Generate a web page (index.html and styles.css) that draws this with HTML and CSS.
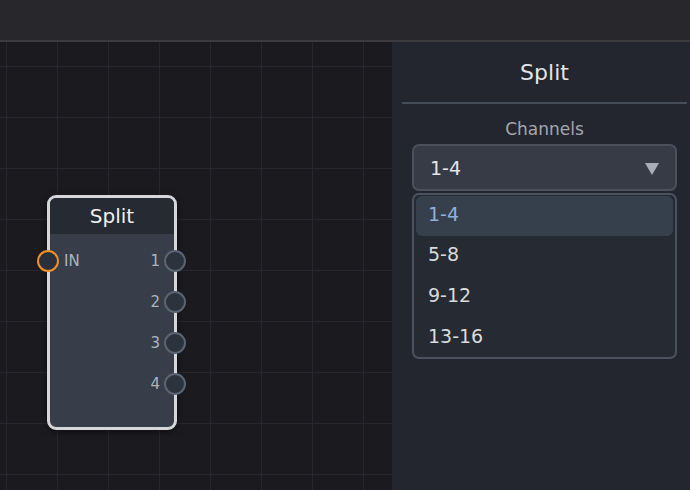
FILE: index.html
```html
<!DOCTYPE html>
<html lang="en">
<head>
    <meta charset="UTF-8">
    <meta name="viewport" content="width=device-width, initial-scale=1.0">
    <title>Split</title>
    <link rel="stylesheet" href="styles.css">
</head>
<body>
    <div class="topbar"></div>

    <div class="main">
        <!-- Node graph canvas -->
        <div class="canvas">
            <div class="node">
                <div class="node-title">Split</div>
                <div class="node-body">
                    <div class="port-row">
                        <span class="port port-in"></span>
                        <span class="port-label in-label">IN</span>
                        <span class="port-label out-label">1</span>
                        <span class="port port-out"></span>
                    </div>
                    <div class="port-row">
                        <span class="port-label out-label">2</span>
                        <span class="port port-out"></span>
                    </div>
                    <div class="port-row">
                        <span class="port-label out-label">3</span>
                        <span class="port port-out"></span>
                    </div>
                    <div class="port-row">
                        <span class="port-label out-label">4</span>
                        <span class="port port-out"></span>
                    </div>
                </div>
            </div>
        </div>

        <!-- Inspector -->
        <div class="panel">
            <h2 class="panel-title">Split</h2>
            <div class="field-label">Channels</div>
            <div class="select">
                <span>1-4</span>
                <span class="caret"></span>
            </div>
            <ul class="options">
                <li class="selected">1-4</li>
                <li>5-8</li>
                <li>9-12</li>
                <li>13-16</li>
            </ul>
        </div>
    </div>
</body>
</html>
```

FILE: styles.css
```css
body {
    margin: 0;
    padding: 0;
    font-family: "DejaVu Sans", sans-serif;
    background-color: #1b1a1f;
    width: 690px;
    height: 490px;
    overflow: hidden;
    display: flex;
    flex-direction: column;
}
.topbar {
    height: 40px;
    background-color: #28272c;
    border-bottom: 2px solid #3b3b40;
}
.main {
    flex: 1;
    display: flex;
}
.canvas {
    width: 392px;
    position: relative;
    background-color: #1b1a1f;
    background-image:
        linear-gradient(to right, #27272d 1px, transparent 1px),
        linear-gradient(to bottom, #27272d 1px, transparent 1px);
    background-size: 51px 51px;
    background-position: 6px 24px;
}
.node {
    position: absolute;
    left: 47px;
    top: 153px;
    width: 124px;
    height: 229px;
    border: 3.5px solid #d6d6d8;
    border-radius: 9px;
    background-color: #373e4a;
    box-shadow: 0 2px 6px rgba(0, 0, 0, 0.5);
}
.node-title {
    height: 36px;
    background-color: #262a33;
    border-radius: 6px 6px 0 0;
    color: #f0f0f0;
    font-size: 20px;
    text-align: center;
    line-height: 36px;
}
.node-body {
    padding-top: 18px;
}
.port-row {
    position: relative;
    height: 41px;
    display: flex;
    align-items: flex-start;
}
.port {
    position: absolute;
    top: -2px;
    width: 18px;
    height: 18px;
    border-radius: 50%;
    border: 2px solid #5a6472;
    background-color: #2d333d;
}
.port-in {
    left: -13px;
    border-color: #f0902a;
    background-color: #2b303a;
}
.port-out {
    right: -12px;
}
.port-label {
    color: #aeb3bb;
    font-size: 15px;
    line-height: 18px;
}
.in-label {
    margin-left: 14px;
}
.out-label {
    margin-left: auto;
    margin-right: 14px;
}
.panel {
    flex: 1;
    background-color: #23262e;
    padding: 0 3px 0 10px;
}
.panel-title {
    margin: 0;
    padding-top: 17px;
    height: 43px;
    font-size: 22px;
    line-height: 27px;
    font-weight: normal;
    text-align: center;
    color: #e4e4e6;
    border-bottom: 2px solid #464c58;
}
.field-label {
    margin-top: 14px;
    text-align: center;
    color: #a3a7ae;
    font-size: 17px;
    line-height: 22px;
}
.select {
    margin: 4px 10px 0 10px;
    height: 43px;
    padding: 0 16px;
    display: flex;
    align-items: center;
    justify-content: space-between;
    background-color: #363b46;
    border: 2px solid #4a505c;
    border-radius: 7px;
    color: #e6e6e8;
    font-size: 19px;
}
.caret {
    width: 0;
    height: 0;
    border-left: 7px solid transparent;
    border-right: 7px solid transparent;
    border-top: 12px solid #a7adb7;
    margin-top: 2px;
}
.options {
    list-style: none;
    margin: 2px 10px 0 10px;
    padding: 1px 2px 0 2px;
    background-color: #262a33;
    border: 2px solid #4a5260;
    border-radius: 7px;
}
.options li {
    height: 41px;
    line-height: 37px;
    padding-left: 12px;
    border-radius: 6px;
    color: #dadadc;
    font-size: 19px;
}
.options li:last-child {
    height: 39px;
}
.options li.selected {
    height: 40px;
    line-height: 36px;
    background-color: #363f4c;
    color: #8fb0dc;
}
```
